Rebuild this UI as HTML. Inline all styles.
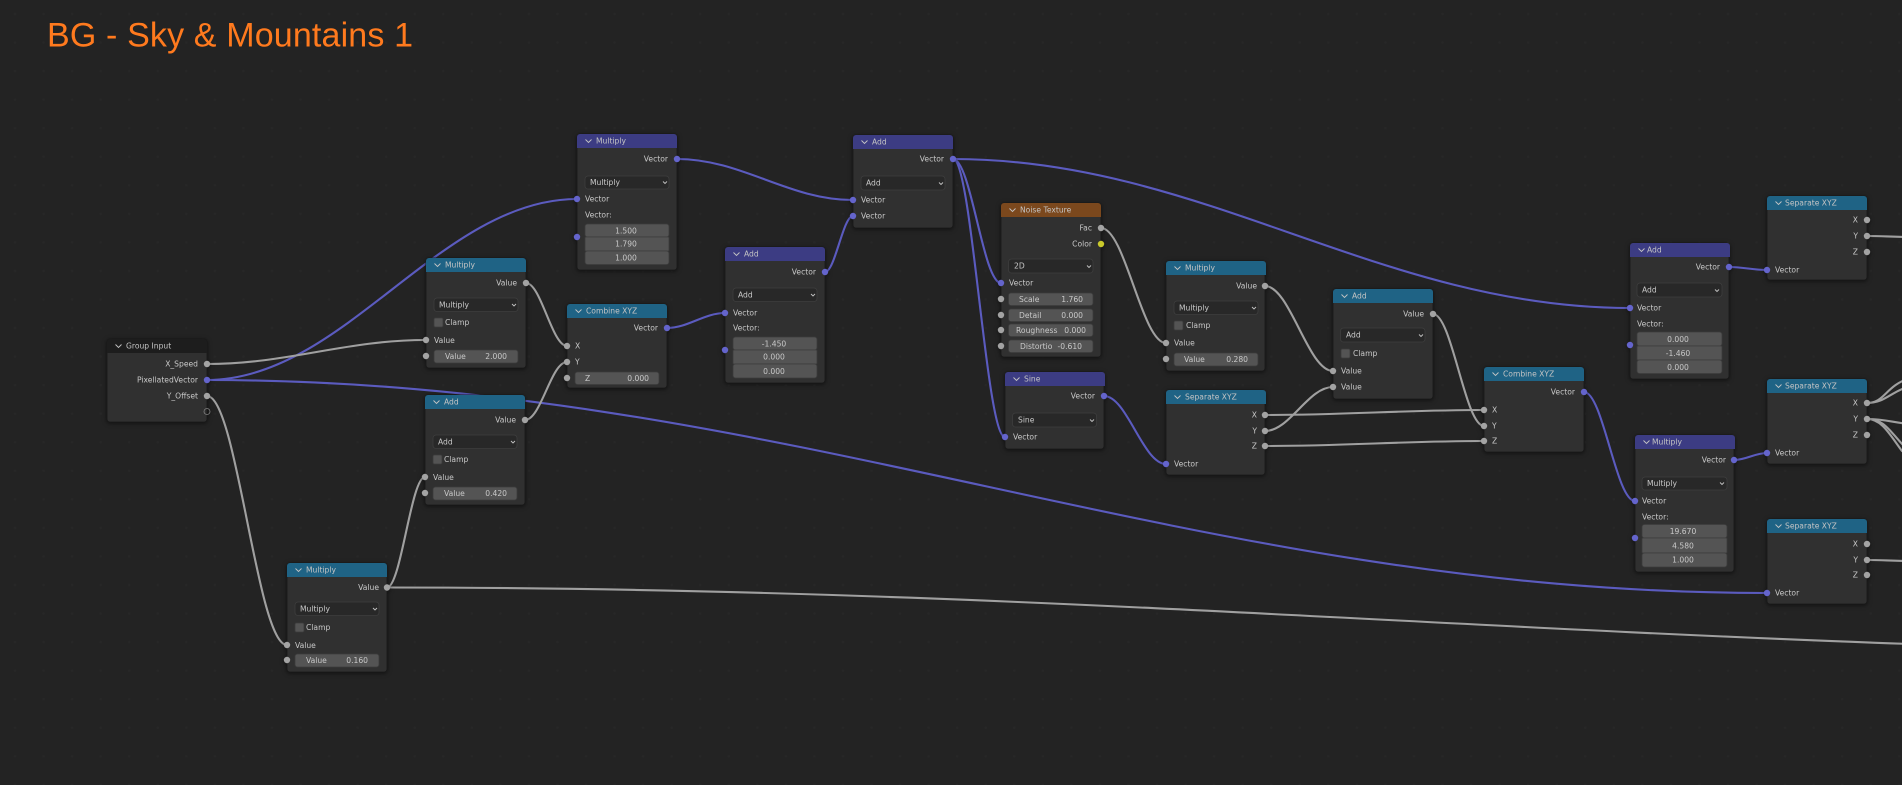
<!DOCTYPE html>
<html>
<head>
<meta charset="utf-8">
<title>BG - Sky &amp; Mountains 1</title>
<style>
html,body{margin:0;padding:0;background:#232323;width:1902px;height:785px;overflow:hidden}
svg{display:block;position:absolute;left:0;top:0}
text{font-family:"DejaVu Sans","Liberation Sans",sans-serif;font-size:7.6px;fill:#c9c9c9}
.r{text-anchor:end}
.c{text-anchor:middle}
.t{fill:#c4c4c4}
.w{filter:blur(.3px)}
.w path{fill:none;stroke-width:2.1;stroke-linecap:round}
.p{stroke:#5b5bbf}
.g{stroke:#a0a0a0}
.n{filter:blur(.35px) drop-shadow(0 1px 2px rgba(0,0,0,.55))}
.bd{fill:#303030;stroke:#191919;stroke-width:.8}
.dd{fill:#282828;stroke:#3e3e3e;stroke-width:.8}
.f{fill:#545454;stroke:#3c3c3c;stroke-width:.8}
.ch{fill:none;stroke:#c4c4c4;stroke-width:.9}
.sg{fill:#a3a3a3;r:3.2px}
.sp{fill:#6464cc;r:3.2px}
.sy{fill:#c9c92b;r:3.2px}
</style>
</head>
<body>
<svg width="1902" height="785" viewBox="0 0 1902 785" xmlns="http://www.w3.org/2000/svg">
<defs>
<pattern id="dots" patternUnits="userSpaceOnUse" width="28.55" height="28.55" x="1" y="0">
<circle cx="14" cy="14" r="1.2" fill="#272727"/>
</pattern>
<path id="h" d="M0 14V3a3 3 0 0 1 3-3h94a3 3 0 0 1 3 3v11z"/>
<path id="c1" class="ch" d="M8.5 5.5L11.5 8.5L14.5 5.5"/>
<path id="c2" class="ch" d="M-2 -1L0 1L2 -1"/>
</defs>
<rect width="1902" height="785" fill="#232323"/>
<rect width="1902" height="785" fill="url(#dots)"/>
<text x="47" y="46.5" textLength="366" lengthAdjust="spacing" style="font-family:'Liberation Sans',sans-serif;font-size:34px;fill:#ff7a1e">BG - Sky &amp; Mountains 1</text>

<g class="w">
<path class="p" d="M207 380C344 380 440 199 577 199"/>
<path class="p" d="M207 380C784 380 1190 593 1767 593"/>
<path class="g" d="M207 364C288 364 345 340 426 340"/>
<path class="g" d="M207 396C237 396 257 645 287 645"/>
<path class="g" d="M387 587.5C401 587.5 411 477 425 477"/>
<path class="g" d="M387 587.5C1132 587.5 1655 653 2400 653"/>
<path class="g" d="M526 283C541 283 552 346 567 346"/>
<path class="g" d="M525 420C541 420 551 362 567 362"/>
<path class="p" d="M667 328C688 328 704 313 725 313"/>
<path class="p" d="M677 159C742 159 788 200 853 200"/>
<path class="p" d="M825 272C835 272 843 216 853 216"/>
<path class="p" d="M953 159C971 159 983 283 1001 283"/>
<path class="p" d="M953 159C972 159 986 437 1005 437"/>
<path class="p" d="M953 159C1203 159 1380 308 1630 308"/>
<path class="g" d="M1101 228C1125 228 1142 343 1166 343"/>
<path class="p" d="M1104 396C1127 396 1143 464 1166 464"/>
<path class="g" d="M1265 286C1290 286 1308 371 1333 371"/>
<path class="g" d="M1265 415C1346 415 1403 410 1484 410"/>
<path class="g" d="M1265 431C1290 431 1308 387 1333 387"/>
<path class="g" d="M1265 446C1346 446 1403 441 1484 441"/>
<path class="g" d="M1433 314C1452 314 1465 426 1484 426"/>
<path class="p" d="M1584 392C1603 392 1616 501 1635 501"/>
<path class="p" d="M1729 267C1743 267 1753 270 1767 270"/>
<path class="p" d="M1734 460C1746 460 1755 453 1767 453"/>
<path class="g" d="M1867 236C1885 236 1890 237 1910 237"/>
<path class="g" d="M1867 403C1885 403 1885 386 1910 378"/>
<path class="g" d="M1867 403C1885 403 1890 392 1910 386"/>
<path class="g" d="M1867 419C1885 419 1895 423 1910 424"/>
<path class="g" d="M1867 419C1885 419 1890 432 1905 447"/>
<path class="g" d="M1867 419C1882 419 1890 435 1902 451"/>
<path class="g" d="M1867 560C1885 560 1890 561 1910 561"/>
</g>

<!-- Group Input -->
<g class="n" transform="translate(107,339)">
<rect class="bd" width="100" height="83" rx="3"/>
<use href="#h" fill="#1d1d1d"/><use href="#c1"/>
<text class="t" x="19" y="9.7">Group Input</text>
<text class="r" x="91" y="27.7">X_Speed</text><circle class="sg" cx="100" cy="25" r="2.9"/>
<text class="r" x="91" y="43.7">PixellatedVector</text><circle class="sp" cx="100" cy="41" r="2.9"/>
<text class="r" x="91" y="59.7">Y_Offset</text><circle class="sg" cx="100" cy="57" r="2.9"/>
<circle cx="100" cy="72.5" r="3" fill="none" stroke="#808080" stroke-width=".8"/>
</g>

<!-- Multiply value (top) -->
<g class="n" transform="translate(426,258)">
<rect class="bd" width="100" height="110" rx="3"/>
<use href="#h" fill="#1f6385"/><use href="#c1"/>
<text class="t" x="19" y="9.7">Multiply</text>
<text class="r" x="91" y="27.7">Value</text><circle class="sg" cx="100" cy="25" r="2.9"/>
<rect class="dd" x="8" y="40" width="84" height="13.5" rx="3"/><text x="13" y="49.5">Multiply</text><use href="#c2" x="88" y="47"/>
<rect class="f" x="8" y="60" width="9" height="9" rx="1.5"/><text x="19" y="67">Clamp</text>
<text x="8" y="85">Value</text><circle class="sg" cx="0" cy="82" r="2.9"/>
<rect class="f" x="8" y="92" width="84" height="13" rx="2.5"/><text x="19" y="101">Value</text><text class="r" x="81" y="101">2.000</text><circle class="sg" cx="0" cy="98" r="2.9"/>
</g>

<!-- Add value (mid) -->
<g class="n" transform="translate(425,395)">
<rect class="bd" width="100" height="110" rx="3"/>
<use href="#h" fill="#1f6385"/><use href="#c1"/>
<text class="t" x="19" y="9.7">Add</text>
<text class="r" x="91" y="27.7">Value</text><circle class="sg" cx="100" cy="25" r="2.9"/>
<rect class="dd" x="8" y="40" width="84" height="13.5" rx="3"/><text x="13" y="49.5">Add</text><use href="#c2" x="88" y="47"/>
<rect class="f" x="8" y="60" width="9" height="9" rx="1.5"/><text x="19" y="67">Clamp</text>
<text x="8" y="85">Value</text><circle class="sg" cx="0" cy="82" r="2.9"/>
<rect class="f" x="8" y="92" width="84" height="13" rx="2.5"/><text x="19" y="101">Value</text><text class="r" x="82" y="101">0.420</text><circle class="sg" cx="0" cy="98" r="2.9"/>
</g>

<!-- Multiply value (bottom) -->
<g class="n" transform="translate(287,563)">
<rect class="bd" width="100" height="109" rx="3"/>
<use href="#h" fill="#1f6385"/><use href="#c1"/>
<text class="t" x="19" y="9.7">Multiply</text>
<text class="r" x="92" y="27.2">Value</text><circle class="sg" cx="100" cy="24.5" r="2.9"/>
<rect class="dd" x="8" y="39" width="84" height="13.5" rx="3"/><text x="13" y="48.5">Multiply</text><use href="#c2" x="88" y="46"/>
<rect class="f" x="8" y="60" width="9" height="9" rx="1.5"/><text x="19" y="67">Clamp</text>
<text x="8" y="85">Value</text><circle class="sg" cx="0" cy="82" r="2.9"/>
<rect class="f" x="8" y="91" width="84" height="13" rx="2.5"/><text x="19" y="100">Value</text><text class="r" x="81" y="100">0.160</text><circle class="sg" cx="0" cy="97" r="2.9"/>
</g>

<!-- Combine XYZ -->
<g class="n" transform="translate(567,304)">
<rect class="bd" width="100" height="84" rx="3"/>
<use href="#h" fill="#1f6385"/><use href="#c1"/>
<text class="t" x="19" y="9.7">Combine XYZ</text>
<text class="r" x="91" y="26.7">Vector</text><circle class="sp" cx="100" cy="24" r="2.9"/>
<text x="8" y="44.7">X</text><circle class="sg" cx="0" cy="42" r="2.9"/>
<text x="8" y="60.7">Y</text><circle class="sg" cx="0" cy="58" r="2.9"/>
<rect class="f" x="8" y="68" width="84" height="12.5" rx="2.5"/><text x="18" y="77">Z</text><text class="r" x="82" y="77">0.000</text><circle class="sg" cx="0" cy="74" r="2.9"/>
</g>

<!-- Multiply vector top -->
<g class="n" transform="translate(577,134)">
<rect class="bd" width="100" height="136" rx="3"/>
<use href="#h" fill="#3c3c83"/><use href="#c1"/>
<text class="t" x="19" y="9.7">Multiply</text>
<text class="r" x="91" y="27.7">Vector</text><circle class="sp" cx="100" cy="25" r="2.9"/>
<rect class="dd" x="8" y="42" width="84" height="13" rx="3"/><text x="13" y="51.2">Multiply</text><use href="#c2" x="88" y="48.5"/>
<text x="8" y="67.7">Vector</text><circle class="sp" cx="0" cy="65" r="2.9"/>
<text x="8" y="83.7">Vector:</text><circle class="sp" cx="0" cy="103" r="2.9"/>
<rect class="f" x="8" y="90" width="84" height="13" rx="2.5"/><rect class="f" x="8" y="103" width="84" height="14" rx="1"/><rect class="f" x="8" y="117" width="84" height="13.5" rx="2.5"/>
<text class="c" x="49" y="99.3">1.500</text><text class="c" x="49" y="112.5">1.790</text><text class="c" x="49" y="126.5">1.000</text>
</g>

<!-- Add vector mid -->
<g class="n" transform="translate(725,247)">
<rect class="bd" width="100" height="136" rx="3"/>
<use href="#h" fill="#3c3c83"/><use href="#c1"/>
<text class="t" x="19" y="9.7">Add</text>
<text class="r" x="91" y="27.7">Vector</text><circle class="sp" cx="100" cy="25" r="2.9"/>
<rect class="dd" x="8" y="41" width="84" height="13.5" rx="3"/><text x="13" y="50.5">Add</text><use href="#c2" x="88" y="48"/>
<text x="8" y="68.7">Vector</text><circle class="sp" cx="0" cy="66" r="2.9"/>
<text x="8" y="83.7">Vector:</text><circle class="sp" cx="0" cy="103" r="2.9"/>
<rect class="f" x="8" y="90" width="84" height="13" rx="2.5"/><rect class="f" x="8" y="103" width="84" height="14" rx="1"/><rect class="f" x="8" y="117" width="84" height="14" rx="2.5"/>
<text class="c" x="49" y="99.3">-1.450</text><text class="c" x="49" y="112.5">0.000</text><text class="c" x="49" y="127.2">0.000</text>
</g>

<!-- Add vector top -->
<g class="n" transform="translate(853,135)">
<rect class="bd" width="100" height="93" rx="3"/>
<use href="#h" fill="#3c3c83"/><use href="#c1"/>
<text class="t" x="19" y="9.7">Add</text>
<text class="r" x="91" y="26.7">Vector</text><circle class="sp" cx="100" cy="24" r="2.9"/>
<rect class="dd" x="8" y="41" width="84" height="14" rx="3"/><text x="13" y="50.7">Add</text><use href="#c2" x="88" y="48.5"/>
<text x="8" y="67.7">Vector</text><circle class="sp" cx="0" cy="65" r="2.9"/>
<text x="8" y="83.7">Vector</text><circle class="sp" cx="0" cy="81" r="2.9"/>
</g>

<!-- Noise Texture -->
<g class="n" transform="translate(1001,203)">
<rect class="bd" width="100" height="154" rx="3"/>
<use href="#h" fill="#7b481d"/><use href="#c1"/>
<text class="t" x="19" y="9.7">Noise Texture</text>
<text class="r" x="91" y="27.7">Fac</text><circle class="sg" cx="100" cy="25" r="2.9"/>
<text class="r" x="91" y="43.7">Color</text><circle class="sy" cx="100" cy="41" r="2.9"/>
<rect class="dd" x="7.5" y="56" width="84.5" height="14" rx="3"/><text x="13" y="65.7">2D</text><use href="#c2" x="88" y="63.5"/>
<text x="8" y="82.7">Vector</text><circle class="sp" cx="0" cy="80" r="2.9"/>
<rect class="f" x="7.5" y="90" width="84.5" height="12.5" rx="2.5"/><text x="18" y="98.8">Scale</text><text class="r" x="82" y="98.8">1.760</text><circle class="sg" cx="0" cy="96" r="2.9"/>
<rect class="f" x="7.5" y="106" width="84.5" height="12.5" rx="2.5"/><text x="18" y="114.8">Detail</text><text class="r" x="82" y="114.8">0.000</text><circle class="sg" cx="0" cy="112" r="2.9"/>
<rect class="f" x="7.5" y="121" width="84.5" height="12.5" rx="2.5"/><text x="15" y="129.8">Roughness</text><text class="r" x="85" y="129.8">0.000</text><circle class="sg" cx="0" cy="127" r="2.9"/>
<rect class="f" x="7.5" y="137" width="84.5" height="12.5" rx="2.5"/><text x="19" y="145.8">Distortio</text><text class="r" x="81" y="145.8">-0.610</text><circle class="sg" cx="0" cy="143" r="2.9"/>
</g>

<!-- Sine -->
<g class="n" transform="translate(1005,372)">
<rect class="bd" width="99" height="77" rx="3"/>
<use href="#h" fill="#3c3c83"/><use href="#c1"/>
<text class="t" x="19" y="9.7">Sine</text>
<text class="r" x="90" y="26.7">Vector</text><circle class="sp" cx="99" cy="24" r="2.9"/>
<rect class="dd" x="7.5" y="41" width="84" height="14" rx="3"/><text x="13" y="50.7">Sine</text><use href="#c2" x="87" y="48.5"/>
<text x="8" y="67.7">Vector</text><circle class="sp" cx="0" cy="65" r="2.9"/>
</g>

<!-- Multiply value (center) -->
<g class="n" transform="translate(1166,261)">
<rect class="bd" width="99" height="110" rx="3"/>
<use href="#h" fill="#1f6385"/><use href="#c1"/>
<text class="t" x="19" y="9.7">Multiply</text>
<text class="r" x="91" y="27.7">Value</text><circle class="sg" cx="99" cy="25" r="2.9"/>
<rect class="dd" x="8" y="40" width="84" height="13.5" rx="3"/><text x="13" y="49.5">Multiply</text><use href="#c2" x="88" y="47"/>
<rect class="f" x="8" y="60" width="9" height="9" rx="1.5"/><text x="20" y="67">Clamp</text>
<text x="8" y="84.7">Value</text><circle class="sg" cx="0" cy="82" r="2.9"/>
<rect class="f" x="8" y="92" width="84" height="13" rx="2.5"/><text x="18" y="101">Value</text><text class="r" x="82" y="101">0.280</text><circle class="sg" cx="0" cy="98" r="2.9"/>
</g>

<!-- Separate XYZ center -->
<g class="n" transform="translate(1166,390)">
<rect class="bd" width="99" height="85" rx="3"/>
<use href="#h" fill="#1f6385"/><use href="#c1"/>
<text class="t" x="19" y="9.7">Separate XYZ</text>
<text class="r" x="91" y="27.7">X</text><circle class="sg" cx="99" cy="25" r="2.9"/>
<text class="r" x="91" y="43.7">Y</text><circle class="sg" cx="99" cy="41" r="2.9"/>
<text class="r" x="91" y="58.7">Z</text><circle class="sg" cx="99" cy="56" r="2.9"/>
<text x="8" y="76.7">Vector</text><circle class="sp" cx="0" cy="74" r="2.9"/>
</g>

<!-- Add value right -->
<g class="n" transform="translate(1333,289)">
<rect class="bd" width="100" height="110" rx="3"/>
<use href="#h" fill="#1f6385"/><use href="#c1"/>
<text class="t" x="19" y="9.7">Add</text>
<text class="r" x="91" y="27.7">Value</text><circle class="sg" cx="100" cy="25" r="2.9"/>
<rect class="dd" x="7.5" y="39" width="84.5" height="14" rx="3"/><text x="13" y="48.7">Add</text><use href="#c2" x="88" y="46.5"/>
<rect class="f" x="8" y="60" width="9" height="9" rx="1.5"/><text x="20" y="67">Clamp</text>
<text x="8" y="84.7">Value</text><circle class="sg" cx="0" cy="82" r="2.9"/>
<text x="8" y="100.7">Value</text><circle class="sg" cx="0" cy="98" r="2.9"/>
</g>

<!-- Combine XYZ right -->
<g class="n" transform="translate(1484,367)">
<rect class="bd" width="100" height="85" rx="3"/>
<use href="#h" fill="#1f6385"/><use href="#c1"/>
<text class="t" x="19" y="9.7">Combine XYZ</text>
<text class="r" x="91" y="27.7">Vector</text><circle class="sp" cx="100" cy="25" r="2.9"/>
<text x="8" y="45.7">X</text><circle class="sg" cx="0" cy="43" r="2.9"/>
<text x="8" y="61.7">Y</text><circle class="sg" cx="0" cy="59" r="2.9"/>
<text x="8" y="76.7">Z</text><circle class="sg" cx="0" cy="74" r="2.9"/>
</g>

<!-- Add vector right -->
<g class="n" transform="translate(1630,243)">
<rect class="bd" width="99" height="136" rx="3"/>
<use href="#h" fill="#3c3c83"/><use href="#c1"/>
<text class="t" x="17" y="9.7">Add</text>
<text class="r" x="90" y="26.7">Vector</text><circle class="sp" cx="99" cy="24" r="2.9"/>
<rect class="dd" x="7" y="40" width="85" height="14" rx="3"/><text x="12" y="49.7">Add</text><use href="#c2" x="87" y="47.5"/>
<text x="7" y="67.7">Vector</text><circle class="sp" cx="0" cy="65" r="2.9"/>
<text x="7" y="83.7">Vector:</text><circle class="sp" cx="0" cy="102" r="2.9"/>
<rect class="f" x="7" y="89" width="85" height="14" rx="2.5"/><rect class="f" x="7" y="103" width="85" height="14" rx="1"/><rect class="f" x="7" y="117" width="85" height="13.5" rx="2.5"/>
<text class="c" x="48" y="99">0.000</text><text class="c" x="48" y="113">-1.460</text><text class="c" x="48" y="127">0.000</text>
</g>

<!-- Multiply vector right -->
<g class="n" transform="translate(1635,435)">
<rect class="bd" width="99" height="137" rx="3"/>
<use href="#h" fill="#3c3c83"/><use href="#c1"/>
<text class="t" x="17" y="9.7">Multiply</text>
<text class="r" x="91" y="27.7">Vector</text><circle class="sp" cx="99" cy="25" r="2.9"/>
<rect class="dd" x="7" y="42" width="85" height="13" rx="3"/><text x="12" y="51.2">Multiply</text><use href="#c2" x="87" y="48.5"/>
<text x="7" y="68.7">Vector</text><circle class="sp" cx="0" cy="66" r="2.9"/>
<text x="7" y="84.7">Vector:</text><circle class="sp" cx="0" cy="103" r="2.9"/>
<rect class="f" x="7" y="89.5" width="85" height="13.5" rx="2.5"/><rect class="f" x="7" y="103" width="85" height="15" rx="1"/><rect class="f" x="7" y="118" width="85" height="14" rx="2.5"/>
<text class="c" x="48" y="99">19.670</text><text class="c" x="48" y="113.5">4.580</text><text class="c" x="48" y="127.7">1.000</text>
</g>

<!-- Separate XYZ top right -->
<g class="n" transform="translate(1767,196)">
<rect class="bd" width="100" height="84" rx="3"/>
<use href="#h" fill="#1f6385"/><use href="#c1"/>
<text class="t" x="18" y="9.7">Separate XYZ</text>
<text class="r" x="91" y="26.7">X</text><circle class="sg" cx="100" cy="24" r="2.9"/>
<text class="r" x="91" y="42.7">Y</text><circle class="sg" cx="100" cy="40" r="2.9"/>
<text class="r" x="91" y="58.7">Z</text><circle class="sg" cx="100" cy="56" r="2.9"/>
<text x="8" y="76.7">Vector</text><circle class="sp" cx="0" cy="74" r="2.9"/>
</g>

<!-- Separate XYZ mid right -->
<g class="n" transform="translate(1767,379)">
<rect class="bd" width="100" height="85" rx="3"/>
<use href="#h" fill="#1f6385"/><use href="#c1"/>
<text class="t" x="18" y="9.7">Separate XYZ</text>
<text class="r" x="91" y="26.7">X</text><circle class="sg" cx="100" cy="24" r="2.9"/>
<text class="r" x="91" y="42.7">Y</text><circle class="sg" cx="100" cy="40" r="2.9"/>
<text class="r" x="91" y="58.7">Z</text><circle class="sg" cx="100" cy="56" r="2.9"/>
<text x="8" y="76.7">Vector</text><circle class="sp" cx="0" cy="74" r="2.9"/>
</g>

<!-- Separate XYZ bottom right -->
<g class="n" transform="translate(1767,519)">
<rect class="bd" width="100" height="85" rx="3"/>
<use href="#h" fill="#1f6385"/><use href="#c1"/>
<text class="t" x="18" y="9.7">Separate XYZ</text>
<text class="r" x="91" y="27.7">X</text><circle class="sg" cx="100" cy="25" r="2.9"/>
<text class="r" x="91" y="43.7">Y</text><circle class="sg" cx="100" cy="41" r="2.9"/>
<text class="r" x="91" y="58.7">Z</text><circle class="sg" cx="100" cy="56" r="2.9"/>
<text x="8" y="76.7">Vector</text><circle class="sp" cx="0" cy="74" r="2.9"/>
</g>
</svg>
</body>
</html>
